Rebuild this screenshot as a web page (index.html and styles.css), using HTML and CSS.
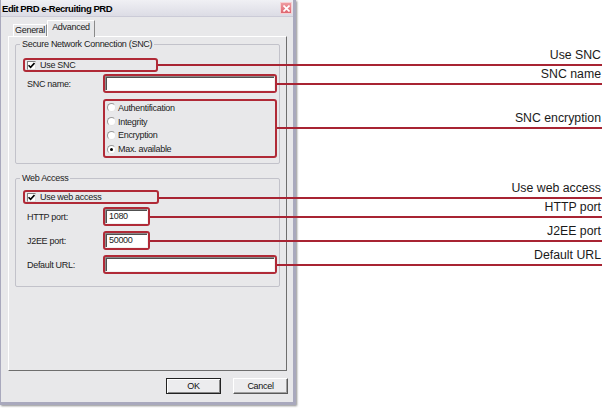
FILE: index.html
```html
<!DOCTYPE html>
<html>
<head>
<meta charset="utf-8">
<link rel="stylesheet" href="styles.css">
</head>
<body>
<div class="stage">
  <div class="window">
    <div class="titlebar">
      <span class="title">Edit PRD e-Recruiting PRD</span>
      <span class="close"><svg width="7" height="7" viewBox="0 0 7 7"><path d="M0.5 0.5 L6.5 6.5 M6.5 0.5 L0.5 6.5" stroke="#fff" stroke-width="1.6"/></svg></span>
    </div>
    <div class="client">
      <div class="tabs">
        <div class="tab">General</div>
        <div class="tab active">Advanced</div>
      </div>
      <div class="panel">
        <fieldset class="group g1">
          <legend>Secure Network Connection (SNC)</legend>
          <div class="hl check-hl"><span class="cb"><svg width="7" height="7" viewBox="0 0 7 7"><path d="M0.5 3.2 L2.6 5.4 L6.5 1" fill="none" stroke="#000" stroke-width="1.6"/></svg></span>Use SNC</div>
          <div class="row r-name"><label>SNC name:</label><div class="hl field-hl wide"><div class="input"></div></div></div>
          <div class="row r-radios"><span></span>
            <div class="hl radios">
              <div class="radio-item"><span class="rb"></span>Authentification</div>
              <div class="radio-item"><span class="rb"></span>Integrity</div>
              <div class="radio-item"><span class="rb"></span>Encryption</div>
              <div class="radio-item"><span class="rb on"></span>Max. available</div>
            </div>
          </div>
        </fieldset>
        <fieldset class="group g2">
          <legend>Web Access</legend>
          <div class="hl check-hl web"><span class="cb"><svg width="7" height="7" viewBox="0 0 7 7"><path d="M0.5 3.2 L2.6 5.4 L6.5 1" fill="none" stroke="#000" stroke-width="1.6"/></svg></span>Use web access</div>
          <div class="row r-http"><label>HTTP port:</label><div class="hl field-hl short"><div class="input">1080</div></div></div>
          <div class="row r-j2ee"><label>J2EE port:</label><div class="hl field-hl short"><div class="input">50000</div></div></div>
          <div class="row r-url"><label>Default URL:</label><div class="hl field-hl wide"><div class="input"></div></div></div>
        </fieldset>
      </div>
      <div class="buttons">
        <button class="btn default">OK</button>
        <button class="btn">Cancel</button>
      </div>
    </div>
  </div>
  <div class="callouts">
    <div class="callout c1">Use SNC</div>
    <div class="callout c2">SNC name</div>
    <div class="callout c3">SNC encryption</div>
    <div class="callout c4">Use web access</div>
    <div class="callout c5">HTTP port</div>
    <div class="callout c6">J2EE port</div>
    <div class="callout c7">Default URL</div>
  </div>
</div>
</body>
</html>
```
FILE: styles.css
```css
* { box-sizing: border-box; }
body { margin: 0; background: #fff; font-family: "Liberation Sans", Arial, sans-serif; color: #111; }
.stage { position: relative; width: 604px; height: 410px; }

.window {
  width: 296px; height: 405px;
  background: #e8e8ea;
  border-style: solid; border-color: #a9a9bd;
  border-width: 0 3px 3px 1px;
  box-shadow: 1px 1px 2px rgba(0,0,0,.45);
  display: flex; flex-direction: column;
  letter-spacing: -0.3px;
  color: #222;
}
.titlebar {
  height: 17px; flex: none;
  display: flex; align-items: center; justify-content: space-between;
  padding: 0 1px 0 1px;
  background: linear-gradient(#f0f0f4, #dcdce5);
  border-bottom: 1px solid #cbcbd7;
}
.title { font-weight: bold; font-size: 9.5px; letter-spacing: -0.45px; color: #000; }
.close {
  width: 12px; height: 12px;
  background: linear-gradient(#ee9aa0, #de6670);
  border: 1px solid #f6d0d3;
  display: flex; align-items: center; justify-content: center;
}
.client { flex: 1; padding-left: 7px; }
.tabs { height: 19px; display: flex; align-items: flex-end; padding-left: 5px; position: relative; z-index: 1; }
.tab {
  height: 12px; width: 34px;
  border: 1px solid; border-bottom: none;
  border-color: #fff #8a8a8a #8a8a8a #fff;
  font-size: 9px; line-height: 11px; text-align: center;
  background: #e8e8ea;
}
.tab.active { height: 17px; width: 48px; margin-bottom: -1px; line-height: 13px; }

.panel {
  width: 279px; height: 335px;
  border: 1px solid; border-color: #fff #6e6e6e #6e6e6e #fff;
  padding-left: 6px;
}
.group {
  margin: 2px 0 0; width: 265px; min-width: 0;
  padding: 8px 2px 5px 7px;
  border: 1px solid #c2c2ca; border-radius: 2px;
}
.group legend { padding: 0 2px; margin-left: -3px; font-size: 9px; line-height: 11px; }
.g2 { margin-top: 9px; padding: 6px 2px 12px 7px; }

.hl { border: 2px solid #b02a37; border-radius: 3px; }
.check-hl {
  width: 135px; height: 14px;
  display: flex; align-items: center; gap: 4px;
  padding-left: 2px; font-size: 9px;
}
.check-hl.web { width: 136px; }
.cb {
  width: 9px; height: 9px; background: #fff;
  border: 1px solid; border-color: #808080 #e0e0e0 #e0e0e0 #808080;
  display: flex; align-items: center; justify-content: center;
}
.row { display: grid; grid-template-columns: 80px auto; align-items: center; font-size: 9px; }
.row label { padding-left: 4px; }
.r-name { margin-top: 2px; }
.r-radios { margin-top: 6px; }
.r-http { margin-top: 3px; }
.r-j2ee, .r-url { margin-top: 5px; }
.field-hl { height: 19px; }
.wide { width: 174px; }
.short { width: 47px; }
.input {
  height: 100%; background: #fff;
  border: 1px solid; border-color: #8c8c8c #f2f2f2 #f2f2f2 #8c8c8c;
  box-shadow: inset 1px 1px 0 #505050;
  font-size: 9px; line-height: 13px; padding-left: 3px;
}
.radios { width: 174px; height: 59px; padding-left: 2px; display: flex; flex-direction: column; }
.radio-item { height: 14px; display: flex; align-items: center; gap: 2px; }
.rb {
  width: 9px; height: 9px; border-radius: 50%; background: #fff;
  border: 1px solid; border-color: #9a9a9a #e4e4e4 #e4e4e4 #9a9a9a;
  display: flex; align-items: center; justify-content: center;
}
.rb.on::after { content: ""; width: 3px; height: 3px; border-radius: 50%; background: #000; }

.buttons { width: 280px; margin-top: 7px; display: flex; justify-content: flex-end; gap: 12px; }
.btn {
  width: 55px; height: 16px; padding: 0;
  font-family: "Liberation Sans", Arial, sans-serif; font-size: 9px; color: #111;
  letter-spacing: -0.3px;
  background: #ececee;
  border: 1px solid; border-color: #fff #5a5a5a #5a5a5a #fff;
  box-shadow: inset -1px -1px 0 #a0a0a0;
}
.btn.default { border: 1px solid #222; box-shadow: inset 1px 1px 0 #fff, inset -1px -1px 0 #888; }

.callouts { position: absolute; inset: 0; pointer-events: none; }
.callout {
  position: absolute; right: 2px; height: 16px;
  border-bottom: 2px solid #a82433;
  text-align: right; font-size: 12.3px; line-height: 11px;
  padding-right: 1px; color: #1a1a1a;
}
.c1 { top: 50px; left: 158px; }
.c2 { top: 69px; left: 277px; }
.c3 { top: 113px; left: 277px; }
.c4 { top: 183px; left: 159px; }
.c5 { top: 202px; left: 150px; }
.c6 { top: 226px; left: 150px; }
.c7 { top: 250px; left: 277px; }
```
